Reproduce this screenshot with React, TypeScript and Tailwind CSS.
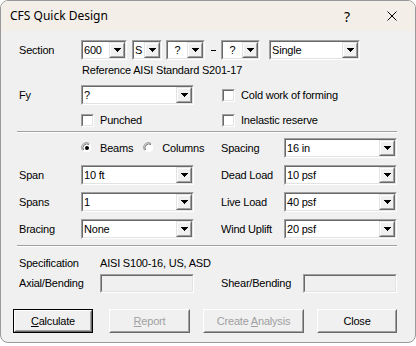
import React from "react";

const font = { fontFamily: '"Liberation Sans", Arial, sans-serif' };

function Arrow({ gray = false }: { gray?: boolean }) {
  const c = gray ? "#a0a0a0" : "#000";
  return (
    <svg width="7" height="4" viewBox="0 0 7 4" shapeRendering="crispEdges">
      <rect x="0" y="0" width="7" height="1" fill={c} />
      <rect x="1" y="1" width="5" height="1" fill={c} />
      <rect x="2" y="2" width="3" height="1" fill={c} />
      <rect x="3" y="3" width="1" height="1" fill={c} />
    </svg>
  );
}

function Combo({ w, value, center = false }: { w: string; value: string; center?: boolean }) {
  return (
    <div
      className={`${w} h-[20px] flex border border-t-[#a0a0a0] border-l-[#a0a0a0] border-r-white border-b-white shrink-0`}
    >
      <div className="flex-1 flex border border-t-[#696969] border-l-[#696969] border-r-[#e3e3e3] border-b-[#e3e3e3] bg-white min-w-0">
        <div
          className={`flex-1 flex items-center text-[11px] text-black leading-none min-w-0 ${
            center ? "justify-center" : "pl-[1px]"
          }`}
        >
          {value}
        </div>
        <div className="w-[16px] h-full flex border border-t-[#e3e3e3] border-l-[#e3e3e3] border-r-[#696969] border-b-[#696969]">
          <div className="flex-1 flex items-center justify-center bg-[#f0f0f0] border border-t-white border-l-white border-r-[#a0a0a0] border-b-[#a0a0a0]">
            <Arrow />
          </div>
        </div>
      </div>
    </div>
  );
}

function Check({ label, className = "" }: { label: string; className?: string }) {
  return (
    <div className={`flex items-center ${className}`}>
      <div className="w-[13px] h-[13px] flex border border-t-[#a0a0a0] border-l-[#a0a0a0] border-r-white border-b-white">
        <div className="flex-1 bg-white border border-t-[#696969] border-l-[#696969] border-r-[#e3e3e3] border-b-[#e3e3e3]" />
      </div>
      <span className="ml-[6px] text-[11px] text-black">{label}</span>
    </div>
  );
}

function Radio({ label, checked }: { label: string; checked?: boolean }) {
  return (
    <div className="flex items-center">
      <svg width="12" height="12" viewBox="0 0 12 12">
        <path d="M1.5 8.5 A5 5 0 0 1 8.5 1.5" stroke="#a0a0a0" fill="none" />
        <path d="M8.5 1.5 A5 5 0 0 1 1.5 8.5" stroke="#ffffff" fill="none" />
        <circle cx="6" cy="6" r="4.2" fill="#fff" />
        <path d="M2.5 8 A4 4 0 0 1 8 2.5" stroke="#696969" fill="none" />
        {checked && <circle cx="6" cy="6" r="2" fill="#000" />}
      </svg>
      <span className="ml-[7px] text-[11px] text-black">{label}</span>
    </div>
  );
}

function Field({ w }: { w: string }) {
  return (
    <div className={`${w} h-[19px] flex border border-t-[#a0a0a0] border-l-[#a0a0a0] border-r-white border-b-white`}>
      <div className="flex-1 bg-[#f0f0f0] border border-t-[#696969] border-l-[#696969] border-r-[#e3e3e3] border-b-[#e3e3e3]" />
    </div>
  );
}

function Btn({
  children,
  w,
  def = false,
  disabled = false,
}: {
  children: React.ReactNode;
  w: string;
  def?: boolean;
  disabled?: boolean;
}) {
  const inner = (
    <div className="flex-1 flex border border-t-white border-l-white border-r-[#696969] border-b-[#696969]">
      <div
        className={`flex-1 flex items-center justify-center bg-[#f0f0f0] border border-t-[#f0f0f0] border-l-[#f0f0f0] border-r-[#a0a0a0] border-b-[#a0a0a0] text-[11px] ${
          disabled ? "text-[#a0a0a0]" : "text-black"
        }`}
      >
        {children}
      </div>
    </div>
  );
  return (
    <div className={`${w} h-[24px] flex ${def ? "border border-black" : ""}`}>{inner}</div>
  );
}

function Sep() {
  return <div className="ml-[-2px] w-[380px] border-t border-t-[#a0a0a0] border-b border-b-white" />;
}

export default function App() {
  return (
    <div className="w-[416px] h-[346px] bg-white tracking-[-0.2px]" style={font}>
      <div className="w-[416px] h-[343px] flex flex-col border border-[#9a9a9a] rounded-[8px] overflow-hidden bg-[#f0f0f0]">
        {/* title bar */}
        <div className="h-[30px] shrink-0 flex items-center bg-[#f4eee8] tracking-normal">
          <span
            className="ml-[9px] text-[12px] text-black"
            style={{ fontFamily: '"Noto Sans", "Open Sans", sans-serif' }}
          >
            CFS Quick Design
          </span>
          <span
            className="ml-auto mr-[37px] text-[14px] text-black"
            style={{ fontFamily: '"Noto Sans", sans-serif' }}
          >
            ?
          </span>
          <svg width="10" height="10" viewBox="0 0 10 10" className="mr-[18px]">
            <path d="M0.5 0.5 L9.5 9.5 M9.5 0.5 L0.5 9.5" stroke="#000" strokeWidth="1" />
          </svg>
        </div>

        {/* body */}
        <div className="flex flex-col pl-[18px] pt-[9px]">
          {/* Section */}
          <div className="h-[20px] flex items-center">
            <span className="w-[62px] text-[11px]">Section</span>
            <Combo w="w-[46px]" value="600" />
            <div className="w-[5px]" />
            <Combo w="w-[30px]" value="S" />
            <div className="w-[4px]" />
            <Combo w="w-[39px]" value="?" center />
            <div className="w-[16px] flex justify-center">
              <div className="w-[5px] h-px bg-black" />
            </div>
            <Combo w="w-[39px]" value="?" center />
            <div className="w-[9px]" />
            <Combo w="w-[91px]" value="Single" />
          </div>
          {/* Reference */}
          <div className="h-[20px] flex items-center pl-[63px]">
            <span className="text-[11px]">Reference AISI Standard S201-17</span>
          </div>
          {/* Fy */}
          <div className="mt-[5px] h-[20px] flex items-center">
            <span className="w-[62px] text-[11px]">Fy</span>
            <Combo w="w-[113px]" value="?" />
            <Check label="Cold work of forming" className="ml-[28px]" />
          </div>
          <div className="mt-[5px] h-[20px] flex items-center pl-[62px]">
            <Check label="Punched" className="w-[141px]" />
            <Check label="Inelastic reserve" />
          </div>
          {/* separator */}
          <div className="mt-[1px]">
            <Sep />
          </div>
          {/* Beams / Spacing */}
          <div className="mt-[5px] h-[20px] flex items-center">
            <div className="w-[62px]" />
            <div className="w-[140px] flex items-center gap-[10px]">
              <Radio label="Beams" checked />
              <Radio label="Columns" />
            </div>
            <span className="w-[63px] text-[11px]">Spacing</span>
            <Combo w="w-[113px]" value="16 in" />
          </div>
          {[
            ["Span", "10 ft", "Dead Load", "10 psf"],
            ["Spans", "1", "Live Load", "40 psf"],
            ["Bracing", "None", "Wind Uplift", "20 psf"],
          ].map(([l1, v1, l2, v2]) => (
            <div key={l1} className="mt-[7px] h-[20px] flex items-center">
              <span className="w-[62px] text-[11px]">{l1}</span>
              <Combo w="w-[113px]" value={v1} />
              <span className="ml-[27px] w-[63px] text-[11px]">{l2}</span>
              <Combo w="w-[113px]" value={v2} />
            </div>
          ))}
          <div className="mt-[6px]">
            <Sep />
          </div>
          {/* Specification */}
          <div className="mt-[7px] h-[18px] flex items-center">
            <span className="w-[81px] text-[11px]">Specification</span>
            <span className="text-[11px]">AISI S100-16, US, ASD</span>
          </div>
          <div className="mt-[2px] h-[19px] flex items-center">
            <span className="w-[81px] text-[11px]">Axial/Bending</span>
            <Field w="w-[94px]" />
            <span className="ml-[27px] w-[82px] text-[11px]">Shear/Bending</span>
            <Field w="w-[94px]" />
          </div>
          {/* Buttons */}
          <div className="mt-[16px] ml-[-6px] flex items-center">
            <Btn w="w-[80px]" def>
              <span>
                <u>C</u>alculate
              </span>
            </Btn>
            <div className="w-[16px]" />
            <Btn w="w-[81px]" disabled>
              <span>
                <u>R</u>eport
              </span>
            </Btn>
            <div className="w-[13px]" />
            <Btn w="w-[101px]" disabled>
              <span>
                Create <u>A</u>nalysis
              </span>
            </Btn>
            <div className="w-[13px]" />
            <Btn w="w-[80px]">Close</Btn>
          </div>
        </div>
      </div>
    </div>
  );
}
